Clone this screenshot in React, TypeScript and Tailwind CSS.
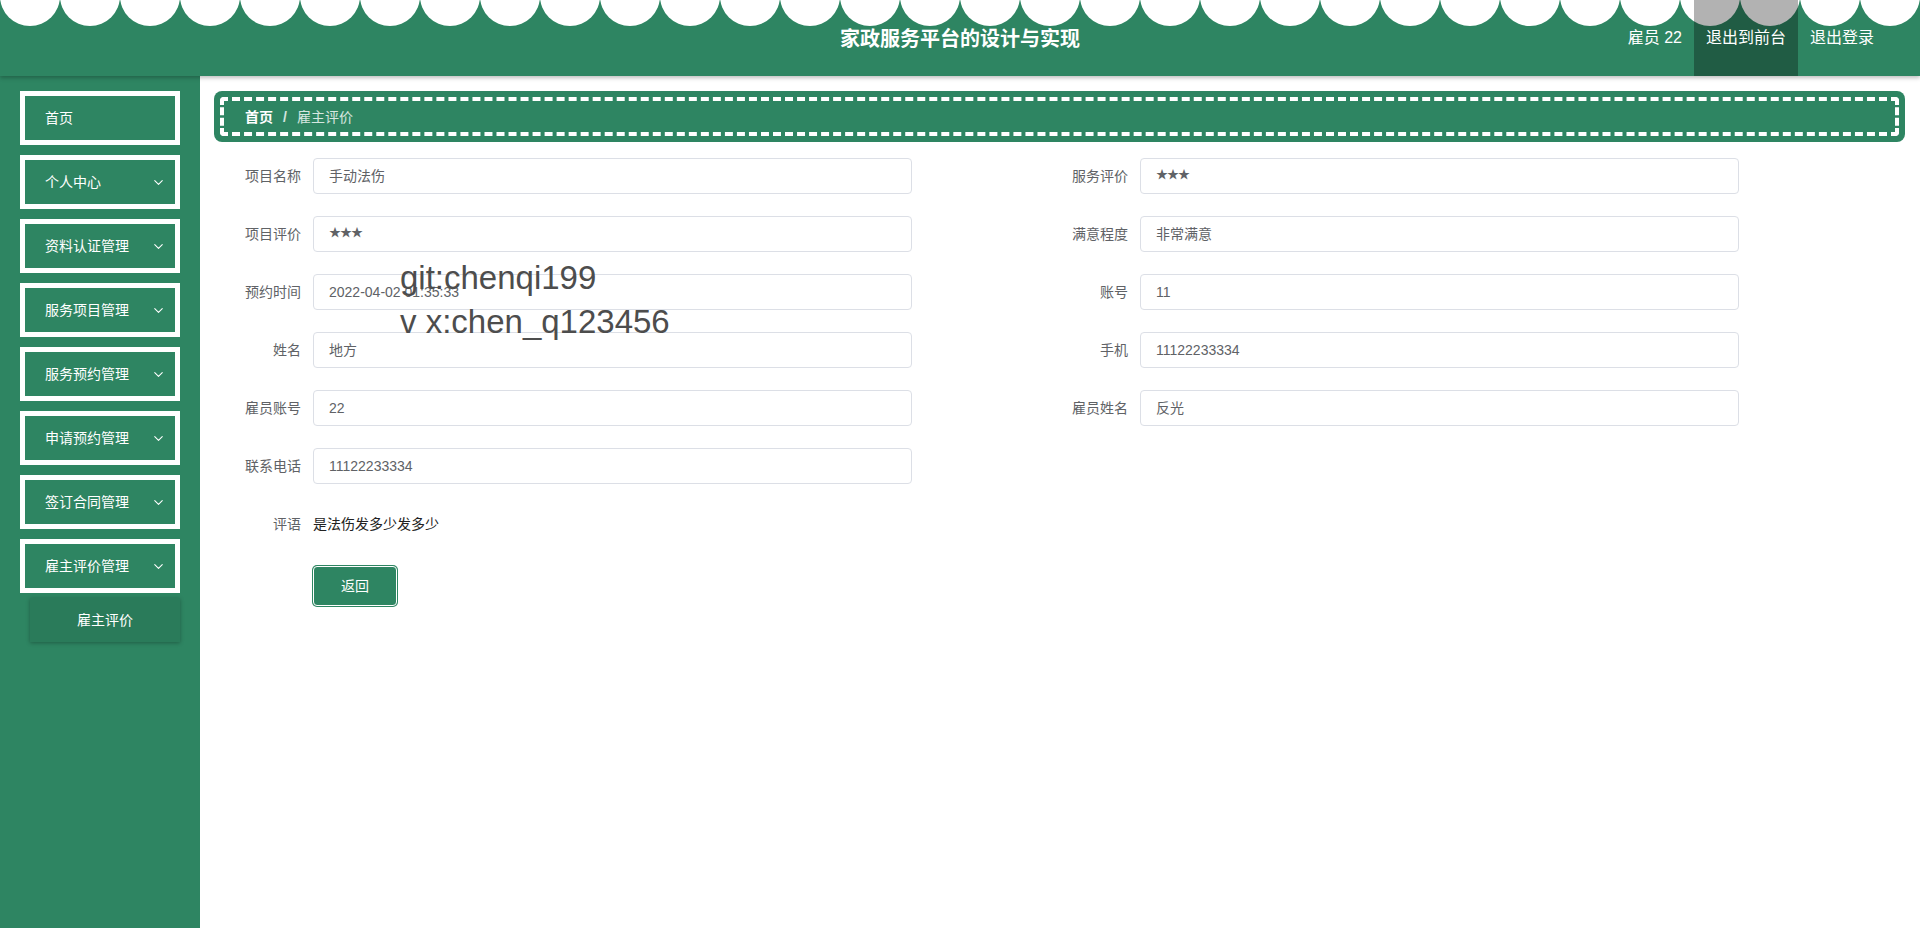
import { ChevronDown } from 'lucide-react';

const GREEN = '#2e8562';

const menus = [
  { label: '首页', sub: false },
  { label: '个人中心', sub: true },
  { label: '资料认证管理', sub: true },
  { label: '服务项目管理', sub: true },
  { label: '服务预约管理', sub: true },
  { label: '申请预约管理', sub: true },
  { label: '签订合同管理', sub: true },
  { label: '雇主评价管理', sub: true },
];

const rows: [string, string, string?, string?][] = [
  ['项目名称', '手动法伤', '服务评价', '★★★'],
  ['项目评价', '★★★', '满意程度', '非常满意'],
  ['预约时间', '2022-04-02 01:35:33', '账号', '11'],
  ['姓名', '地方', '手机', '11122233334'],
  ['雇员账号', '22', '雇员姓名', '反光'],
  ['联系电话', '11122233334'],
];

const Field = ({ label, value }: { label: string; value: string }) => (
  <div className="flex items-center">
    <label className="w-[100px] pr-[12px] text-right text-sm text-[#606266]">{label}</label>
    <div className="w-[599px] h-[36px] px-[15px] flex items-center rounded-[4px] border border-[#dcdfe6] bg-white text-sm text-[#606266]">
      {value.startsWith('★') ? <span className="text-[12px] tracking-[-1px]">{value}</span> : value}
    </div>
  </div>
);

const Scallops = () => (
  <svg className="absolute left-0 top-0" width="1920" height="30" viewBox="0 0 1920 30">
    {Array.from({ length: 33 }).map((_, i) => (
      <circle key={i} cx={30 + i * 60} cy={-4} r={30} fill="#ffffff" />
    ))}
  </svg>
);

export default function App() {
  return (
    <div
      className="w-[1920px] h-[928px] flex flex-col bg-white overflow-hidden"
      style={{ fontFamily: '"Liberation Sans", "Noto Sans CJK SC", sans-serif' }}
    >
      <header className="relative h-[76px] shrink-0 bg-[#2e8562] shadow-[0_2px_4px_rgba(0,0,0,0.25)] z-20">
        <Scallops />
        <div className="relative grid grid-cols-[1fr_auto_1fr] h-full items-center">
          <div />
          <h1 className="text-[20px] font-bold text-white pt-[1px]">家政服务平台的设计与实现</h1>
          <nav className="flex justify-end h-full pr-[34px] text-base text-white">
            <span className="px-3 flex items-center">雇员 22</span>
            <span className="px-3 flex items-center bg-black/30">退出到前台</span>
            <span className="px-3 flex items-center">退出登录</span>
          </nav>
        </div>
      </header>

      <div className="flex flex-1 min-h-0">
        <aside className="w-[200px] shrink-0 bg-[#2e8562] pt-[15px] px-[20px]">
          <div className="flex flex-col gap-[10px]">
            {menus.map((m) => (
              <div
                key={m.label}
                className="h-[54px] border-[5px] border-white flex items-center justify-between pl-[20px] pr-[9px] text-sm text-white"
              >
                <span>{m.label}</span>
                {m.sub && <ChevronDown className="w-[15px] h-[15px]" strokeWidth={1.75} />}
              </div>
            ))}
          </div>
          <div className="ml-[10px] mt-[5px] h-[44px] bg-[#2a7b5a] shadow-[0_1px_4px_rgba(0,0,0,0.3)] flex items-center justify-center text-sm text-white">
            雇主评价
          </div>
        </aside>

        <main className="relative flex-1 pt-[15px] pl-[14px] pr-[15px]">
          <div className="h-[51px] rounded-[8px] p-[6px]" style={{ backgroundColor: GREEN }}>
            <div className="h-full rounded-[4px] border-4 border-dashed border-white flex items-center pl-[21px] text-sm">
              <span className="font-bold text-white">首页</span>
              <span className="mx-[10px] font-bold text-white/80">/</span>
              <span className="text-white/80">雇主评价</span>
            </div>
          </div>

          <div className="pt-[16px] -ml-[1px]">
            {rows.map(([l1, v1, l2, v2]) => (
              <div key={l1} className="grid grid-cols-[827px_827px] mb-[22px]">
                <Field label={l1} value={v1} />
                {l2 && v2 ? <Field label={l2} value={v2} /> : <div />}
              </div>
            ))}
            <div className="flex items-center h-[36px] mb-[24px]">
              <label className="w-[100px] pr-[12px] text-right text-sm text-[#606266]">评语</label>
              <span className="text-sm text-[#222]">是法伤发多少发多少</span>
            </div>
            <div className="pl-[100px]">
              <button className="w-[84px] h-[40px] rounded-[4px] bg-[#2e8562] border border-white ring-1 ring-[#2e8562] text-sm text-white">
                返回
              </button>
            </div>
          </div>

          <div className="absolute left-[200px] top-[180px] text-[33px] leading-[44px] text-[#4d4d4d] pointer-events-none">
            <div>git:chenqi199</div>
            <div>v x:chen_q123456</div>
          </div>
        </main>
      </div>
    </div>
  );
}
